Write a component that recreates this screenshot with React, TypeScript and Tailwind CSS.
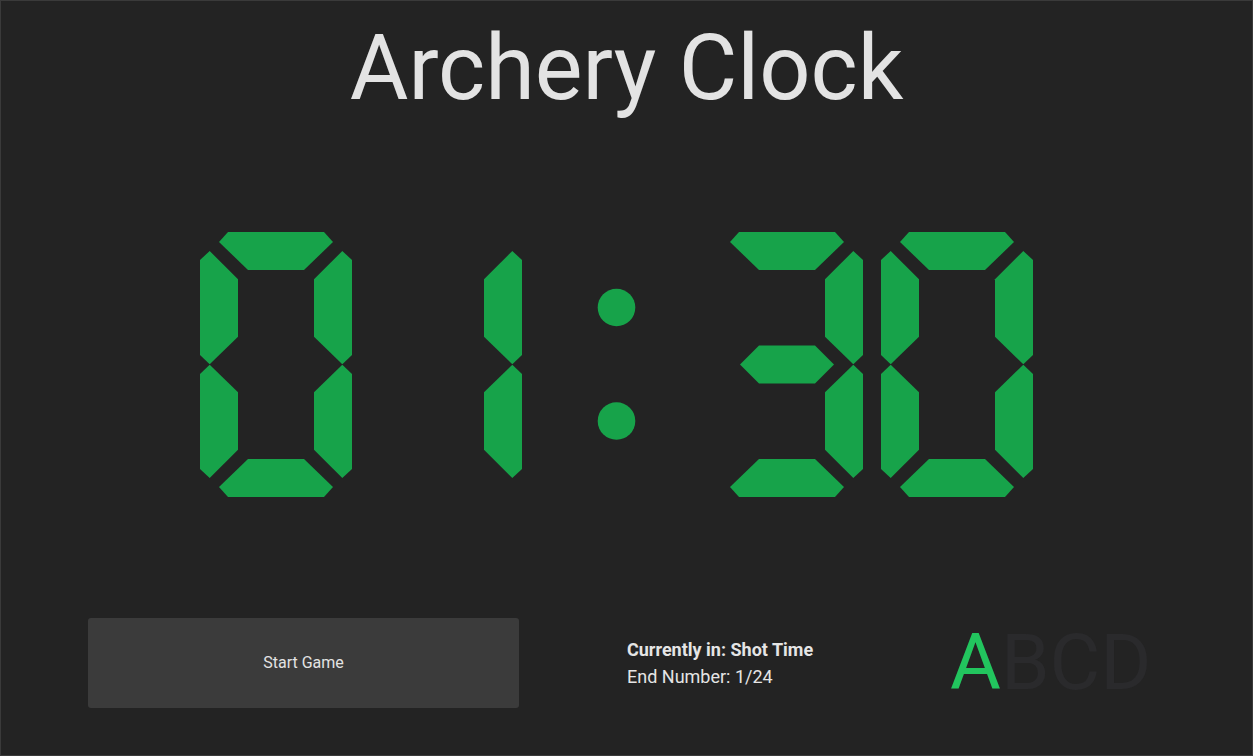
import React from "react";

// segment polygons for a 152x265 seven-segment digit
const SEGMENTS: Record<string, string> = {
  a: "28,0 124,0 133,10 104,38 48,38 19,10",
  b: "142.3,19 152,28 152,123 142.3,132.3 114,104.7 114,47.3",
  c: "142.3,132.7 152,142 152,237 142.3,246 114,217.7 114,160.3",
  d: "28,265 124,265 133,255 104,227 48,227 19,255",
  e: "9.7,246 38,217.7 38,160.3 9.7,132.7 0,142 0,237",
  f: "9.7,19 38,47.3 38,104.7 9.7,132.3 0,123 0,28",
  g: "29,132.5 48,113.5 104,113.5 123,132.5 104,151.5 48,151.5",
};

const DIGITS: Record<string, string> = {
  "0": "abcdef",
  "1": "bc",
  "2": "abdeg",
  "3": "abcdg",
  "4": "bcfg",
  "5": "acdfg",
  "6": "acdefg",
  "7": "abc",
  "8": "abcdefg",
  "9": "abcdfg",
};

function Digit({ value }: { value: string }) {
  return (
    <svg width="152" height="265" viewBox="0 0 152 265" className="shrink-0">
      {DIGITS[value].split("").map((s) => (
        <polygon key={s} points={SEGMENTS[s]} fill="#17a34a" />
      ))}
    </svg>
  );
}

function Colon() {
  return (
    <svg width="189" height="265" viewBox="0 0 189 265" className="shrink-0">
      <circle cx="94.5" cy="75.5" r="18.8" fill="#17a34a" />
      <circle cx="94.5" cy="189" r="18.8" fill="#17a34a" />
    </svg>
  );
}

export default function App() {
  const time = "0130";
  const ends = ["A", "B", "C", "D"];
  const active = "A";

  return (
    <div className="h-screen overflow-hidden border border-[#3a3a3a] bg-[#232323] font-[Roboto,sans-serif] text-[#e5e5e5]">
      <h1 className="pt-[23px] text-center text-[90px] font-normal leading-none text-[#e3e3e3]">
        Archery Clock
      </h1>

      <div className="mt-[118px] flex justify-center pr-[20px]">
        <div className="flex gap-[18px]">
          <Digit value={time[0]} />
          <Digit value={time[1]} />
        </div>
        <Colon />
        <div className="flex gap-[18px]">
          <Digit value={time[2]} />
          <Digit value={time[3]} />
        </div>
      </div>

      <div className="mt-[121px] flex items-center pl-[87px]">
        <button className="flex h-[90px] w-[431px] items-center justify-center rounded-[3px] bg-[#3b3b3b] text-[16px] text-[#e3e3e3]">
          Start Game
        </button>
        <div className="ml-[108px] w-[323px] text-[18px] leading-[27px]">
          <p className="font-bold">Currently in: Shot Time</p>
          <p>End Number: 1/24</p>
        </div>
        <div className="flex text-[78px] leading-none">
          {ends.map((e) => (
            <span
              key={e}
              className={e === active ? "text-[#22c55e]" : "text-[#2a2a2c]"}
            >
              {e}
            </span>
          ))}
        </div>
      </div>
    </div>
  );
}
